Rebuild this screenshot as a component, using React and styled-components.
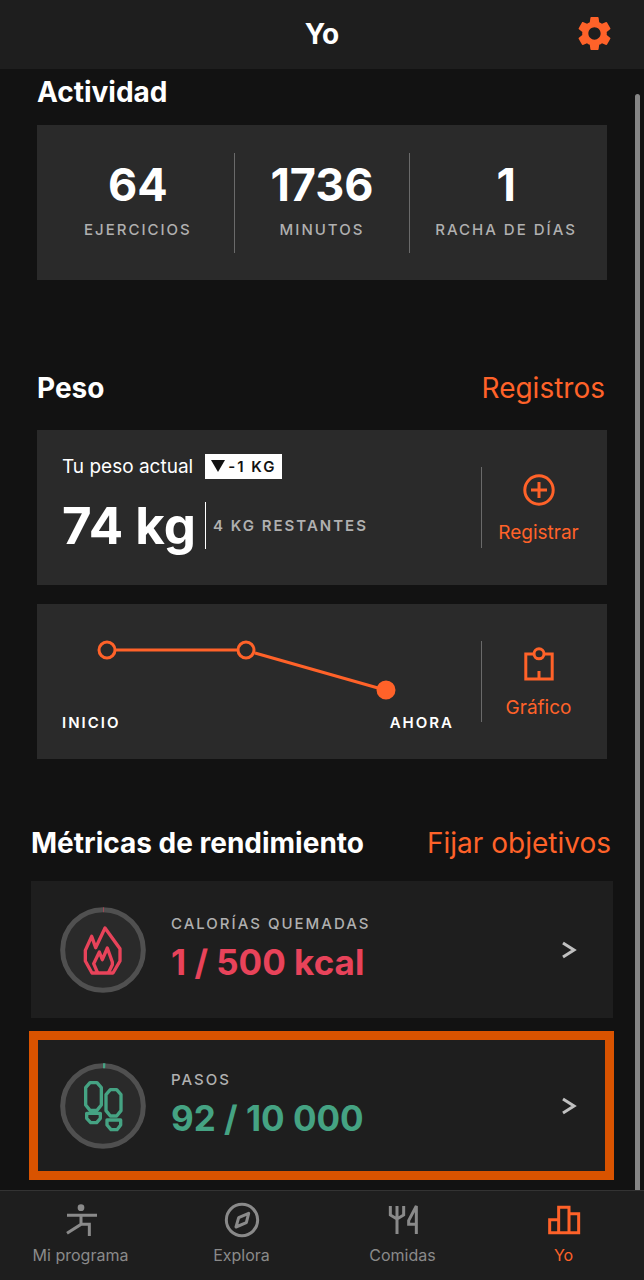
import React from 'react';
import styled, { createGlobalStyle } from 'styled-components';
import { MdSettings } from 'react-icons/md';

const ORANGE = '#ff6229';
const RED = '#e8435a';
const GREEN = '#45a383';

const GlobalStyle = createGlobalStyle`
  * {
    box-sizing: border-box;
  }

  body {
    margin: 0;
    background: #121212;
    color: #fff;
    font-family: Inter, 'Liberation Sans', sans-serif;
  }

  button {
    padding: 0;
    border: 0;
    background: none;
    font: inherit;
    cursor: pointer;
  }

  h1, h2, p {
    margin: 0;
  }

  a {
    text-decoration: none;
  }

  svg {
    display: block;
  }
`;

const AppWrapper = styled.div`
  display: flex;
  flex-direction: column;
  min-height: 100vh;
`;

const Header = styled.header`
  display: grid;
  grid-template-columns: 1fr auto 1fr;
  align-items: center;
  padding: 13px 29px 15px;
  background: #1e1e1e;
`;

const PageTitle = styled.h1`
  grid-column: 2;
  font-size: 28px;
  line-height: 40px;
  font-weight: 700;
`;

const SettingsButton = styled.button`
  justify-self: end;
  color: ${ORANGE};
`;

const Content = styled.main`
  position: relative;
  flex: 1;
  padding-bottom: 16px;
`;

const ScrollThumb = styled.div`
  position: absolute;
  top: 25px;
  right: 4px;
  bottom: 0;
  width: 5px;
  border-radius: 3px 3px 0 0;
  background: #868686;
`;

const Section = styled.section`
  display: flex;
  flex-direction: column;
  gap: ${p => p.$gap || 19}px;
  padding: ${p => p.$top}px ${p => (p.$wide ? 31 : 37)}px 0;
`;

const SectionHeader = styled.div`
  display: flex;
  align-items: center;
  justify-content: space-between;
  padding-bottom: ${p => p.$space || 0}px;
`;

const SectionTitle = styled.h2`
  font-size: 28px;
  line-height: 36px;
  font-weight: 700;
`;

const SectionLink = styled.a`
  padding-right: 2px;
  color: ${ORANGE};
  font-size: 28px;
  line-height: 36px;
`;

const Card = styled.div`
  display: flex;
  align-items: center;
  min-height: 155px;
  background: #2a2a2a;
`;

const StatsCard = styled(Card)`
  padding: 0 5px;
`;

const Stat = styled.div`
  flex: ${p => p.$grow} 1 0;
  display: flex;
  flex-direction: column;
  align-items: center;
  gap: 7px;
  padding: 6px 0 11px;

  & + & {
    border-left: 1px solid #6a6a6a;
  }
`;

const StatValue = styled.span`
  font-size: 45px;
  line-height: 52px;
  font-weight: 700;
`;

const Caption = styled.span`
  color: ${p => p.$color || '#b0b0b0'};
  font-size: 15px;
  line-height: 24px;
  font-weight: ${p => p.$weight || 500};
  letter-spacing: 2px;
`;

const CardBody = styled.div`
  flex: 1;
  padding: 0 27px ${p => p.$bottom || 0}px 25px;
`;

const CardAction = styled.button`
  display: flex;
  flex-direction: column;
  align-items: center;
  justify-content: center;
  gap: 15px;
  width: 126px;
  height: 81px;
  padding: 4px 12px 0 0;
  border-left: 1px solid #6a6a6a;
  color: ${ORANGE};
  font-size: 19px;
  line-height: 24px;
`;

const WeightTop = styled.div`
  display: flex;
  align-items: center;
  gap: 12px;
  font-size: 19px;
  line-height: 25px;
`;

const Badge = styled.span`
  display: flex;
  align-items: center;
  gap: 3px;
  padding: 0 5px 0 6px;
  background: #fff;
  color: #121212;
  font-size: 15px;
  font-weight: 600;
  letter-spacing: 2px;
`;

const WeightBottom = styled.div`
  display: flex;
  align-items: center;
  gap: 9px;
  padding-top: 19px;
`;

const WeightValue = styled.span`
  font-size: 51px;
  line-height: 56px;
  font-weight: 700;
`;

const Remaining = styled.div`
  display: flex;
  align-items: center;
  height: 47px;
  padding-left: 7px;
  border-left: 1px solid #fff;
`;

const ChartLabels = styled.div`
  display: flex;
  justify-content: space-between;
`;

const MetricCard = styled.button`
  position: relative;
  display: flex;
  align-items: center;
  gap: 25px;
  min-height: 137px;
  padding: 0 36px 0 29px;
  background: #1e1e1e;
  color: #c0c0c0;
  text-align: left;

  &::after {
    content: '';
    display: ${p => (p.$highlighted ? 'block' : 'none')};
    position: absolute;
    inset: -6px -1px -6px -2px;
    border: 9px solid #d95300;
  }
`;

const MetricText = styled.span`
  flex: 1;
  display: flex;
  flex-direction: column;
`;

const MetricValue = styled.span`
  color: ${p => p.$color};
  font-size: 35px;
  line-height: 52px;
  font-weight: 700;
`;

const TabBar = styled.nav`
  display: grid;
  grid-template-columns: repeat(4, 1fr);
  border-top: 1px solid #333;
  background: #1e1e1e;
`;

const Tab = styled.a`
  display: flex;
  flex-direction: column;
  align-items: center;
  gap: 4px;
  padding: 9px 0 14px;
  color: ${p => (p.$active ? ORANGE : '#8a8a8a')};
  font-size: 16px;
  line-height: 22px;
`;

const Icon = ({ box, size, stroke, children }) => (
  <svg
    width={size}
    height={size}
    viewBox={`0 0 ${box} ${box}`}
    fill="none"
    stroke="currentColor"
    strokeWidth={stroke}
    aria-hidden="true"
  >
    {children}
  </svg>
);

const PlusIcon = () => (
  <Icon box={32} size={32} stroke={3}>
    <circle cx="16" cy="16" r="14.2" />
    <path d="M16 8v16M8 16h16" />
  </Icon>
);

const ChartIcon = () => (
  <Icon box={34} size={34} stroke={3}>
    <path d="M12 7H3.8V32H30.2V7H22M17 24v8" />
    <circle cx="17" cy="6.8" r="5" />
  </Icon>
);

const Ring = ({ color, progress, children }) => (
  <Icon box={258} size={86} stroke={10}>
    <circle cx="129" cy="129" r="121" fill="#2a2a2a" stroke="#505050" strokeWidth="15" />
    <circle
      cx="129"
      cy="129"
      r="121"
      stroke={color}
      strokeWidth="15"
      pathLength="100"
      strokeDasharray={`${progress} 100`}
      transform="rotate(-90 129 129)"
    />
    <g stroke={color} strokeLinejoin="round">
      {children}
    </g>
  </Icon>
);

const Flame = () => (
  <>
    <path d="M135 63L180 125V162L159 198H96L76 162V130L95 88L107 122Z" />
    <path d="M113 198L101 170L118 135L127 158L142 123L157 165V173L145 198" />
  </>
);

const Shoes = () => (
  <>
    <path d="M90 59H111L124 74V126L111 142H90L77 126V74Z" />
    <path d="M151 80H170L183 95V143L170 159H151L138 143V95Z" />
    <path d="M80 151H121V166L110 179H92L80 166Z" />
    <path d="M141 171H182V186L171 200H153L141 186Z" />
  </>
);

const WeightChart = () => (
  <svg width="100%" height="82" viewBox="0 0 392 82" fill="none" stroke={ORANGE} strokeWidth="3" role="img" aria-label="Peso">
    <path d="M53 21H176M193 24L316 59" />
    <circle cx="45" cy="21" r="8" />
    <circle cx="184" cy="21" r="8" />
    <circle cx="324" cy="61" r="8" fill={ORANGE} />
  </svg>
);

const stats = [
  { value: '64', label: 'EJERCICIOS', grow: 11 },
  { value: '1736', label: 'MINUTOS', grow: 10 },
  { value: '1', label: 'RACHA DE DÍAS', grow: 11 },
];

const metrics = [
  {
    label: 'CALORÍAS QUEMADAS',
    value: '1 / 500 kcal',
    color: RED,
    progress: 0.2,
    icon: <Flame />,
  },
  {
    label: 'PASOS',
    value: '92 / 10 000',
    color: GREEN,
    progress: 0.92,
    icon: <Shoes />,
    highlighted: true,
  },
];

const tabs = [
  {
    label: 'Mi programa',
    icon: (
      <>
        <circle cx="60" cy="23" r="10" fill="currentColor" stroke="none" />
        <path d="M18 46H108M60 46V73L18 100M60 73H85V108" />
      </>
    ),
  },
  {
    label: 'Explora',
    icon: (
      <>
        <circle cx="60" cy="60" r="47" />
        <path d="M80 40L73 68L42 81L50 53Z" strokeLinejoin="round" />
      </>
    ),
  },
  {
    label: 'Comidas',
    icon: <path d="M22 18V45L42 57L62 45V18M42 18V102M100 102V18L77 62V73H100" />,
  },
  {
    label: 'Yo',
    active: true,
    icon: <path d="M44 98H17V59H44M44 98V22H75V98ZM75 41H104V98H75" />,
  },
];

const App = () => (
  <AppWrapper>
    <GlobalStyle />
    <Header>
      <PageTitle>Yo</PageTitle>
      <SettingsButton aria-label="Ajustes">
        <MdSettings size={41} />
      </SettingsButton>
    </Header>

    <Content>
      <Section $top={5} $gap={15}>
        <SectionTitle>Actividad</SectionTitle>
        <StatsCard>
          {stats.map(({ value, label, grow }) => (
            <Stat key={label} $grow={grow}>
              <StatValue>{value}</StatValue>
              <Caption>{label}</Caption>
            </Stat>
          ))}
        </StatsCard>
      </Section>

      <Section $top={90}>
        <SectionHeader $space={5}>
          <SectionTitle>Peso</SectionTitle>
          <SectionLink href="#registros">Registros</SectionLink>
        </SectionHeader>
        <Card>
          <CardBody $bottom={8}>
            <WeightTop>
              Tu peso actual
              <Badge>
                <svg width="14" height="12" viewBox="0 0 14 12" aria-hidden="true">
                  <path d="M0 0H14L7 12Z" fill="#121212" />
                </svg>
                -1 KG
              </Badge>
            </WeightTop>
            <WeightBottom>
              <WeightValue>74 kg</WeightValue>
              <Remaining>
                <Caption $weight={600}>4 KG RESTANTES</Caption>
              </Remaining>
            </WeightBottom>
          </CardBody>
          <CardAction>
            <PlusIcon />
            Registrar
          </CardAction>
        </Card>
        <Card>
          <CardBody>
            <WeightChart />
            <ChartLabels>
              <Caption $color="#fff" $weight={600}>INICIO</Caption>
              <Caption $color="#fff" $weight={600}>AHORA</Caption>
            </ChartLabels>
          </CardBody>
          <CardAction>
            <ChartIcon />
            Gráfico
          </CardAction>
        </Card>
      </Section>

      <Section $top={66} $wide>
        <SectionHeader $space={1}>
          <SectionTitle>Métricas de rendimiento</SectionTitle>
          <SectionLink href="#objetivos">Fijar objetivos</SectionLink>
        </SectionHeader>
        {metrics.map(({ label, value, color, progress, icon, highlighted }) => (
          <MetricCard key={label} $highlighted={highlighted}>
            <Ring color={color} progress={progress}>
              {icon}
            </Ring>
            <MetricText>
              <Caption>{label}</Caption>
              <MetricValue $color={color}>{value}</MetricValue>
            </MetricText>
            <svg width="15" height="18" viewBox="0 0 15 18" fill="none" stroke="currentColor" strokeWidth="3" aria-hidden="true">
              <path d="M1 2L12 9L1 16" />
            </svg>
          </MetricCard>
        ))}
      </Section>
      <ScrollThumb />
    </Content>

    <TabBar>
      {tabs.map(({ label, icon, active }) => (
        <Tab key={label} href="#" $active={active} aria-current={active ? 'page' : undefined}>
          <Icon box={120} size={40} stroke={9}>
            {icon}
          </Icon>
          {label}
        </Tab>
      ))}
    </TabBar>
  </AppWrapper>
);

export default App;
